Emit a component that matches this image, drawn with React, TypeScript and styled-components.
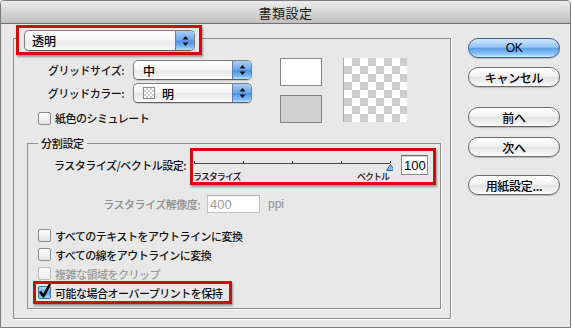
import React from "react"
import styled, { createGlobalStyle } from "styled-components"

const GlobalStyle = createGlobalStyle`
	html, body {
		margin: 0;
		padding: 0;
		background: #ffffff;
	}
	body {
		font-family: "Noto Sans CJK JP", "Noto Sans", sans-serif;
		font-size: 11px;
		font-weight: 500;
		color: #111;
	}
	* {
		box-sizing: border-box;
	}
`

const Window = styled.div`
	width: 571px;
	height: 328px;
	border: 1px solid #7c7c7c;
	border-radius: 4px 4px 0 0;
	background: #e8e8e8;
	display: flex;
	flex-direction: column;
	overflow: hidden;
`

const TitleBar = styled.div`
	flex: none;
	height: 23px;
	border-bottom: 1px solid #707070;
	background: linear-gradient(#ececec, #c0c0c0);
	display: flex;
	align-items: center;
	justify-content: center;
	font-size: 13px;
	font-weight: 400;
	color: #1a1a1a;
	letter-spacing: 0.5px;
`

const Body = styled.div`
	flex: 1;
	display: flex;
	align-items: flex-start;
	padding: 14px 10px 0 12px;
`

const GroupBox = styled.div<{ $width: number }>`
	width: ${(p) => p.$width}px;
	display: flex;
	flex-direction: column;
	border: 1px solid #8e8e8e;
	box-shadow: 1px 1px 0 #ffffff;
`

const OuterBox = styled(GroupBox)`
	padding: 0 9px 9px 2px;
`

const InnerBox = styled(GroupBox)`
	margin-top: 18px;
	padding: 0 3px 4px 10px;
`

const Indent = styled.div`
	display: flex;
	flex-direction: column;
	padding-left: 11px;
`

const GroupCaption = styled.div`
	align-self: flex-start;
	margin-top: -7px;
	padding: 0 3px;
	line-height: 12px;
	background: #e8e8e8;
	letter-spacing: -0.3px;
`

const RedFrame = styled.div<{ $w: number }>`
	width: ${(p) => p.$w}px;
	border: 3px solid #d00d0d;
	box-shadow: 1px 2px 2px rgba(0, 0, 0, 0.35);
	background: #e8e8e8;
	display: flex;
`

const PopupFrame = styled(RedFrame)`
	align-self: flex-start;
	margin-top: -14px;
	padding: 2px 4px 1px 5px;
`

const SliderFrame = styled(RedFrame)`
	height: 37px;
	align-items: flex-start;
`

const CheckFrame = styled(RedFrame)`
	margin: -2px 0 0 -5px;
	padding-left: 2px;
	height: 23px;
	align-items: center;
`

const Popup = styled.div<{ $h: number }>`
	flex: 1;
	height: ${(p) => p.$h}px;
	display: flex;
	align-items: stretch;
	border: 1px solid #7e7e7e;
	border-bottom-color: #5e5e5e;
	border-radius: 5px;
	background: linear-gradient(#ffffff 0%, #f4f4f4 48%, #e9e9e9 52%, #f3f3f3 85%, #ffffff 100%);
	box-shadow: 0 1px 1px rgba(0, 0, 0, 0.15);
	overflow: hidden;
`

const PopupLabel = styled.div<{ $pad: number }>`
	flex: 1;
	display: flex;
	align-items: center;
	gap: 7px;
	padding-left: ${(p) => p.$pad}px;
	font-size: 12px;
	color: #000;
`

const PopupArrows = styled.div`
	width: 19px;
	display: flex;
	align-items: center;
	justify-content: center;
	border-left: 1px solid #5b7fb4;
	background: linear-gradient(#a9cdf6 0%, #6ea6e9 48%, #4d8fe2 52%, #7fbaf6 85%, #b7e2ff 100%);
`

const MiniChecker = styled.span`
	width: 12px;
	height: 12px;
	border: 1px solid #8a8a8a;
	background-color: #fff;
	background-image: conic-gradient(#d0d0d0 0 25%, #fff 0 50%, #d0d0d0 0 75%, #fff 0);
	background-size: 4px 4px;
`

const TopSection = styled.div`
	display: flex;
	align-items: flex-start;
	padding-top: 3px;
`

const FormColumn = styled.div`
	display: flex;
	flex-direction: column;
	padding-top: 2px;
`

const FormGrid = styled.div`
	display: grid;
	grid-template-columns: 97px 119px;
	grid-auto-rows: 20px;
	column-gap: 9px;
	row-gap: 3px;
	align-items: center;
`

const FieldLabel = styled.div<{ $dim?: boolean }>`
	text-align: right;
	white-space: nowrap;
	letter-spacing: -0.5px;
	color: ${(p) => (p.$dim ? "#8e8e8e" : "#111")};
`

const CheckRow = styled.div<{ $h: number; $top?: number; $indent?: number }>`
	height: ${(p) => p.$h}px;
	margin-top: ${(p) => p.$top ?? 0}px;
	padding-left: ${(p) => p.$indent ?? 0}px;
	display: flex;
	align-items: center;
	gap: 4px;
	white-space: nowrap;
	letter-spacing: -0.5px;
`

const CheckText = styled.span<{ $dim?: boolean }>`
	color: ${(p) => (p.$dim ? "#9a9a9a" : "#111")};
`

const Box = styled.span<{ $checked?: boolean; $dim?: boolean }>`
	flex: none;
	width: 13px;
	height: 13px;
	display: flex;
	border: 1px solid ${(p) => (p.$dim ? "#bdbdbd" : p.$checked ? "#4a6a98" : "#8a8a8a")};
	border-radius: 2px;
	background: ${(p) =>
		p.$checked
			? "linear-gradient(#b9d8f8, #6aa6ea 50%, #5b99e4 52%, #a8d4fb)"
			: p.$dim
				? "linear-gradient(#fbfbfb, #eeeeee)"
				: "linear-gradient(#ffffff, #e4e4e4)"};
	overflow: visible;
`

const Swatches = styled.div`
	display: flex;
	margin-left: 28px;
`

const SwatchColumn = styled.div`
	display: flex;
	flex-direction: column;
	gap: 9px;
`

const Swatch = styled.div<{ $fill: string }>`
	width: 42px;
	height: 28px;
	border: 1px solid #858585;
	background: ${(p) => p.$fill};
`

const Checker = styled.div`
	width: 64px;
	height: 64px;
	margin-left: 21px;
	border-left: 1px solid #a8a8a8;
	background-color: #fff;
	background-image: conic-gradient(#cdcdcd 0 25%, #fff 0 50%, #cdcdcd 0 75%, #fff 0);
	background-size: 16px 16px;
`

const SliderRow = styled.div`
	display: flex;
	align-items: flex-start;
	gap: 4px;
	margin-top: -1px;
`

const SliderLabel = styled(FieldLabel)`
	width: 148px;
	margin-top: 10px;
	line-height: 14px;
`

const Slider = styled.div`
	width: 200px;
	display: flex;
	flex-direction: column;
`

const SliderMarks = styled.div`
	display: flex;
	justify-content: space-between;
	padding-right: 4px;
	font-size: 9px;
	line-height: 11px;
	letter-spacing: -1px;
	color: #111;
`

const NumberField = styled.div<{ $w: number; $h: number; $top?: number; $dim?: boolean }>`
	width: ${(p) => p.$w}px;
	height: ${(p) => p.$h}px;
	margin-top: ${(p) => p.$top ?? 0}px;
	padding-left: 2px;
	display: flex;
	align-items: center;
	border: 1px solid ${(p) => (p.$dim ? "#c2c2c2" : "#8a8a8a")};
	border-top-color: ${(p) => (p.$dim ? "#b4b4b4" : "#666")};
	background: #fff;
	box-shadow: inset 0 1px 1px rgba(0, 0, 0, ${(p) => (p.$dim ? 0.06 : 0.18)});
	font-family: "Liberation Sans", Arial, sans-serif;
	font-weight: 400;
	font-size: 13px;
	color: ${(p) => (p.$dim ? "#9c9c9c" : "#000")};
`

const ResolutionRow = styled.div`
	display: flex;
	align-items: center;
	margin-top: 10px;
	height: 18px;
`

const ResolutionLabel = styled(FieldLabel)`
	width: 162px;
	margin-right: 7px;
`

const Unit = styled.span`
	margin-left: 8px;
	font-family: "Liberation Sans", Arial, sans-serif;
	font-weight: 400;
	font-size: 12px;
	color: #8e8e8e;
`

const CheckList = styled.div`
	display: flex;
	flex-direction: column;
	margin-top: 13px;
`

const ButtonColumn = styled.div`
	width: 92px;
	margin-left: 17px;
	display: flex;
	flex-direction: column;
`

const PillButton = styled.div<{ $primary?: boolean; $top: number }>`
	height: 20px;
	margin-top: ${(p) => p.$top}px;
	display: flex;
	align-items: center;
	justify-content: center;
	border: 1px solid ${(p) => (p.$primary ? "#3d5f92" : "#6a6a6a")};
	border-radius: 10px;
	background: ${(p) =>
		p.$primary
			? "linear-gradient(#d2e8fd 0%, #96c5f4 45%, #609fe9 52%, #86c2f8 82%, #c9f0ff 100%)"
			: "linear-gradient(#ffffff 0%, #f3f3f3 45%, #e3e3e3 52%, #f1f1f1 82%, #ffffff 100%)"};
	box-shadow: 0 1px 1px rgba(0, 0, 0, 0.2);
	font-size: 12px;
	color: #000;
	letter-spacing: -0.3px;
`

const OkText = styled.span`
	font-family: "Liberation Sans", Arial, sans-serif;
	font-size: 12px;
`

const Arrows = () => (
	<svg width="7" height="12" viewBox="0 0 7 12">
		<path d="M3.5 1 L6.5 4.6 L0.5 4.6 Z" fill="#111" />
		<path d="M0.5 7.4 L6.5 7.4 L3.5 11 Z" fill="#111" />
	</svg>
)

const CheckBox = ({ checked, dim }: { checked?: boolean; dim?: boolean }) => (
	<Box $checked={checked} $dim={dim}>
		{checked && (
			<svg width="13" height="13" viewBox="0 0 13 13" style={{ overflow: "visible", marginLeft: -1, marginTop: -1 }}>
				<path d="M2.6 6.2 L5.4 10.4 L11.6 -1.2" stroke="#000" strokeWidth="2.5" fill="none" strokeLinecap="round" strokeLinejoin="round" />
			</svg>
		)}
	</Box>
)

const SliderTrack = () => {
	const ticks = [1, 50, 99, 148, 197]
	return (
		<svg width="200" height="20" viewBox="0 0 200 20">
			<line x1="1" y1="12.5" x2="197" y2="12.5" stroke="#4a4a4a" />
			{ticks.map((x) => (
				<line key={x} x1={x + 0.5} y1="10" x2={x + 0.5} y2="12" stroke="#222" />
			))}
			<path d="M197.5 13.5 L201.5 19.5 L193.5 19.5 Z" fill="#86b8ee" stroke="#3e5f8f" strokeLinejoin="round" />
		</svg>
	)
}

const options = [
	{ label: "すべてのテキストをアウトラインに変換" },
	{ label: "すべての線をアウトラインに変換" },
	{ label: "複雑な領域をクリップ", dim: true },
]

export default function App() {
	return (
		<>
			<GlobalStyle />
			<Window>
				<TitleBar>書類設定</TitleBar>
				<Body>
					<OuterBox $width={438}>
						<PopupFrame $w={186}>
							<Popup $h={21}>
								<PopupLabel $pad={7}>透明</PopupLabel>
								<PopupArrows>
									<Arrows />
								</PopupArrows>
							</Popup>
						</PopupFrame>
						<Indent>
							<TopSection>
								<FormColumn>
									<FormGrid>
										<FieldLabel>グリッドサイズ:</FieldLabel>
										<Popup $h={20}>
											<PopupLabel $pad={9}>中</PopupLabel>
											<PopupArrows>
												<Arrows />
											</PopupArrows>
										</Popup>
										<FieldLabel>グリッドカラー:</FieldLabel>
										<Popup $h={20}>
											<PopupLabel $pad={9}>
												<MiniChecker />
												明
											</PopupLabel>
											<PopupArrows>
												<Arrows />
											</PopupArrows>
										</Popup>
									</FormGrid>
									<CheckRow $h={14} $top={8} $indent={11}>
										<CheckBox />
										<CheckText>紙色のシミュレート</CheckText>
									</CheckRow>
								</FormColumn>
								<Swatches>
									<SwatchColumn>
										<Swatch $fill="#ffffff" />
										<Swatch $fill="#cfcfcf" />
									</SwatchColumn>
									<Checker />
								</Swatches>
							</TopSection>
							<InnerBox $width={414}>
								<GroupCaption>分割設定</GroupCaption>
								<SliderRow>
									<SliderLabel>ラスタライズ/ベクトル設定:</SliderLabel>
									<SliderFrame $w={246}>
										<Slider>
											<SliderTrack />
											<SliderMarks>
												<span>ラスタライズ</span>
												<span>ベクトル</span>
											</SliderMarks>
										</Slider>
										<NumberField $w={27} $h={20} $top={4} style={{ marginLeft: 8 }}>
											100
										</NumberField>
									</SliderFrame>
								</SliderRow>
								<ResolutionRow>
									<ResolutionLabel $dim>ラスタライズ解像度:</ResolutionLabel>
									<NumberField $w={53} $h={18} $dim>
										400
									</NumberField>
									<Unit>ppi</Unit>
								</ResolutionRow>
								<CheckList>
									{options.map((o) => (
										<CheckRow key={o.label} $h={19}>
											<CheckBox dim={o.dim} />
											<CheckText $dim={o.dim}>{o.label}</CheckText>
										</CheckRow>
									))}
									<CheckFrame $w={199}>
										<CheckRow $h={17}>
											<CheckBox checked />
											<CheckText>可能な場合オーバープリントを保持</CheckText>
										</CheckRow>
									</CheckFrame>
								</CheckList>
							</InnerBox>
						</Indent>
					</OuterBox>
					<ButtonColumn>
						<PillButton $primary $top={0}>
							<OkText>OK</OkText>
						</PillButton>
						<PillButton $top={9}>キャンセル</PillButton>
						<PillButton $top={20}>前へ</PillButton>
						<PillButton $top={10}>次へ</PillButton>
						<PillButton $top={18}>用紙設定...</PillButton>
					</ButtonColumn>
				</Body>
			</Window>
		</>
	)
}
